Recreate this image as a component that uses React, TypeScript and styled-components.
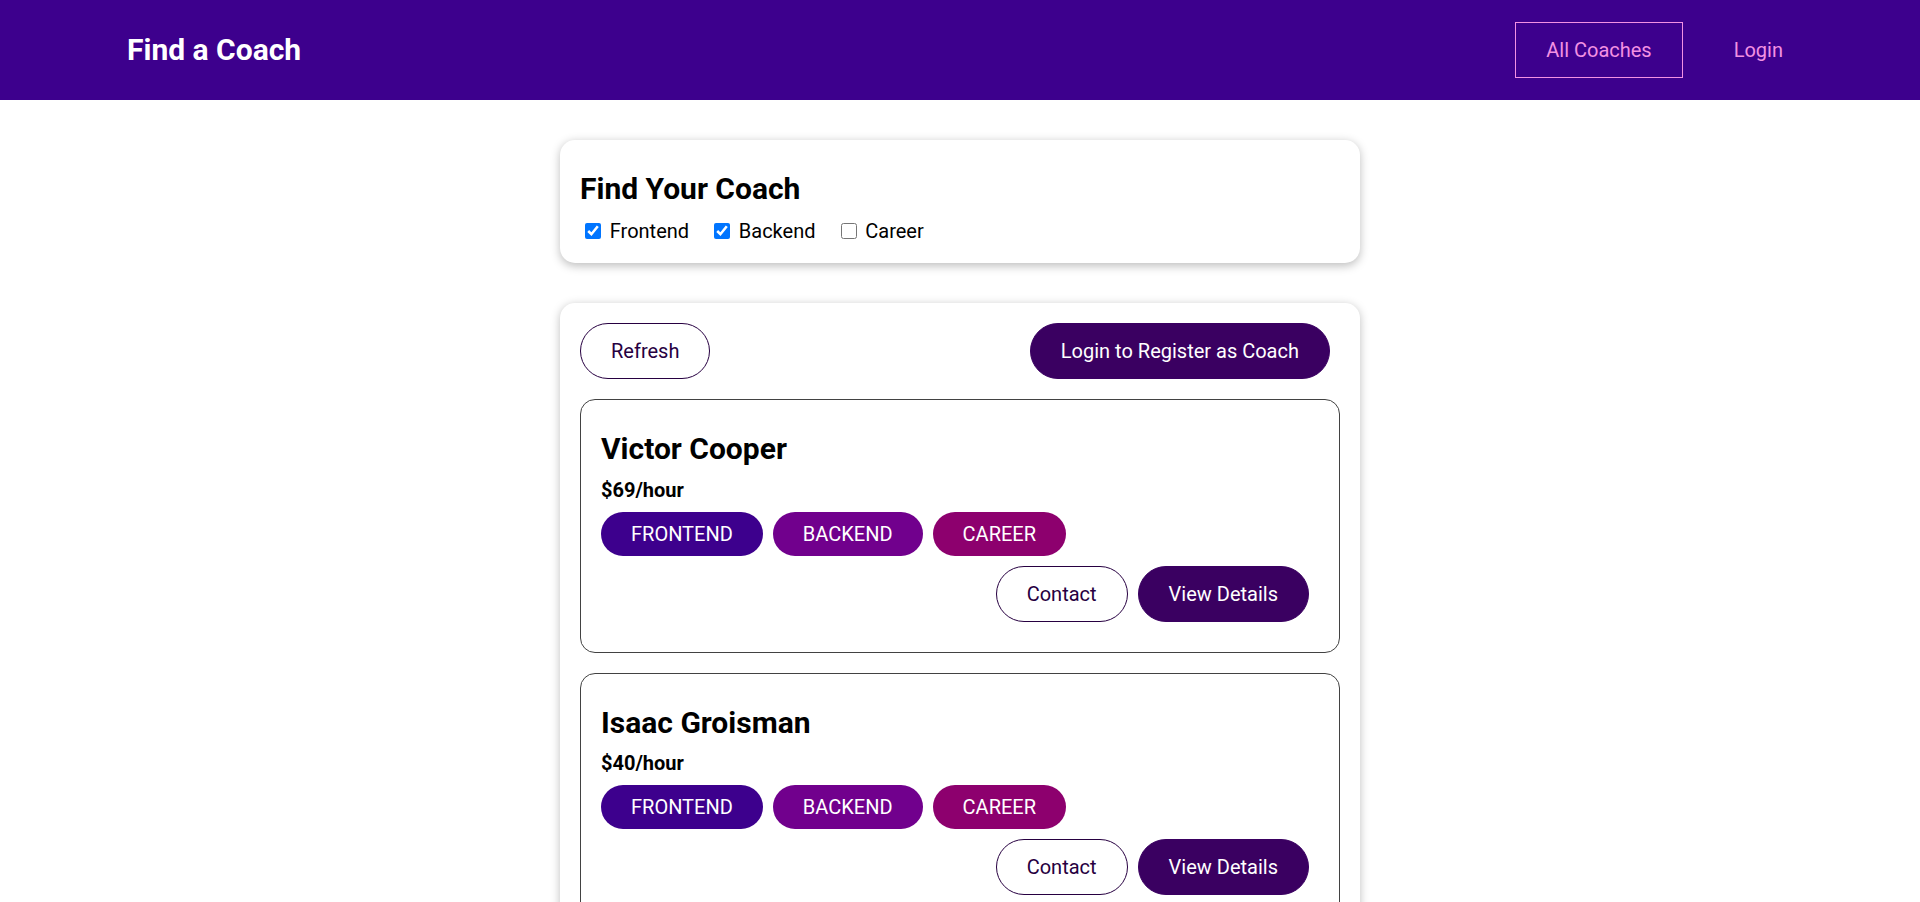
import React from "react";
import styled, { createGlobalStyle } from "styled-components";

const GlobalStyle = createGlobalStyle`
  * { box-sizing: border-box; }
  html { font-family: Roboto, "Liberation Sans", sans-serif; font-size: 20px; line-height: 1.2; }
  body { margin: 0; }
`;

const Header = styled.header`
  width: 100%;
  height: 5rem;
  background-color: #3d008d;
  display: flex;
  justify-content: center;
  align-items: center;
`;

const Nav = styled.nav`
  width: 90%;
  margin: auto;
  display: flex;
  justify-content: space-between;
  align-items: center;
`;

const Title = styled.h1`
  margin: 0;
  font-size: 1.5rem;
  font-weight: 700;
`;

const NavLink = styled.a<{ $active?: boolean; $plain?: boolean }>`
  text-decoration: none;
  color: ${(p) => (p.$plain ? "white" : "#f391e3")};
  display: inline-block;
  padding: 0.75rem 1.5rem;
  border: 1px solid ${(p) => (p.$active ? "#f391e3" : "transparent")};
  cursor: pointer;
`;

const NavList = styled.ul`
  list-style: none;
  margin: 0;
  padding: 0;
  display: flex;
  justify-content: center;
  align-items: center;
`;

const NavItem = styled.li`
  margin: 0 0.5rem;
`;

const Card = styled.div`
  border-radius: 15px;
  box-shadow: 0 2.5px 10px rgba(0, 0, 0, 0.26);
  padding: 1rem;
  margin: 2rem auto;
  max-width: 40rem;
  background: white;
`;

const FilterTitle = styled.h2`
  margin: 0.5rem 0;
  font-size: 1.5rem;
  line-height: 1.25;
  font-weight: 700;
`;

const FilterOption = styled.span`
  margin-right: 1rem;
`;

const Checkbox = styled.input`
  vertical-align: middle;
  width: 16px;
  height: 16px;
  margin: 3.75px 3.75px 3.75px 5px;
`;

const FilterLabel = styled.label`
  vertical-align: middle;
  margin-left: 0.25rem;
`;

const Controls = styled.div`
  display: flex;
  justify-content: space-between;
`;

const Button = styled.a<{ $outline?: boolean }>`
  text-decoration: none;
  padding: 0.75rem 1.5rem;
  font: inherit;
  background-color: ${(p) => (p.$outline ? "transparent" : "#3a0061")};
  border: 1px solid ${(p) => (p.$outline ? "#270041" : "#3a0061")};
  color: ${(p) => (p.$outline ? "#270041" : "white")};
  cursor: pointer;
  border-radius: 37.5px;
  margin-right: 0.5rem;
  display: inline-block;
`;

const CoachList = styled.ul`
  list-style: none;
  margin: 0;
  padding: 0;
`;

const CoachItem = styled.li`
  margin: 1rem 0;
  border: 1px solid #424242;
  border-radius: 15px;
  padding: 1rem;
`;

const CoachName = styled.h3`
  font-size: 1.5rem;
  line-height: 1.25;
  margin: 0.5rem 0;
  font-weight: 700;
`;

const Rate = styled.h4`
  font-size: 1rem;
  margin: 0.5rem 0;
  font-weight: 700;
`;

const BadgeRow = styled.div`
  margin: 0.5rem 0;
`;

const Actions = styled.div`
  margin: 0.5rem 0;
  display: flex;
  justify-content: flex-end;
`;

const badgeColors: Record<string, string> = {
  frontend: "#3d008d",
  backend: "#71008d",
  career: "#8d006e",
};

const Badge = styled.span<{ $area: string }>`
  background-color: ${(p) => badgeColors[p.$area] || "#ccc"};
  color: white;
  border-radius: 37.5px;
  padding: 0.5rem 1.5rem;
  display: inline-block;
  margin-right: 0.5rem;
`;

const coaches = [
  { name: "Victor Cooper", rate: 69, areas: ["frontend", "backend", "career"] },
  { name: "Isaac Groisman", rate: 40, areas: ["frontend", "backend", "career"] },
  { name: "Julie Jones", rate: 30, areas: ["backend", "career"] },
];

export default function App() {
  return (
    <>
      <GlobalStyle />
      <Header>
        <Nav>
          <Title>
            <NavLink $plain>Find a Coach</NavLink>
          </Title>
          <NavList>
            <NavItem>
              <NavLink $active>All Coaches</NavLink>
            </NavItem>
            <NavItem>
              <NavLink>Login</NavLink>
            </NavItem>
          </NavList>
        </Nav>
      </Header>
      <main>
        <section>
          <Card>
            <FilterTitle>Find Your Coach</FilterTitle>
            <FilterOption>
              <Checkbox type="checkbox" id="frontend" defaultChecked />
              <FilterLabel htmlFor="frontend">Frontend</FilterLabel>
            </FilterOption>
            <FilterOption>
              <Checkbox type="checkbox" id="backend" defaultChecked />
              <FilterLabel htmlFor="backend">Backend</FilterLabel>
            </FilterOption>
            <FilterOption>
              <Checkbox type="checkbox" id="career" />
              <FilterLabel htmlFor="career">Career</FilterLabel>
            </FilterOption>
          </Card>
        </section>
        <section>
          <Card>
            <Controls>
              <Button $outline>Refresh</Button>
              <Button>Login to Register as Coach</Button>
            </Controls>
            <CoachList>
              {coaches.map((c) => (
                <CoachItem key={c.name}>
                  <CoachName>{c.name}</CoachName>
                  <Rate>${c.rate}/hour</Rate>
                  <BadgeRow>
                    {c.areas.map((a) => (
                      <Badge key={a} $area={a}>
                        {a.toUpperCase()}
                      </Badge>
                    ))}
                  </BadgeRow>
                  <Actions>
                    <Button $outline>Contact</Button>
                    <Button>View Details</Button>
                  </Actions>
                </CoachItem>
              ))}
            </CoachList>
          </Card>
        </section>
      </main>
    </>
  );
}
